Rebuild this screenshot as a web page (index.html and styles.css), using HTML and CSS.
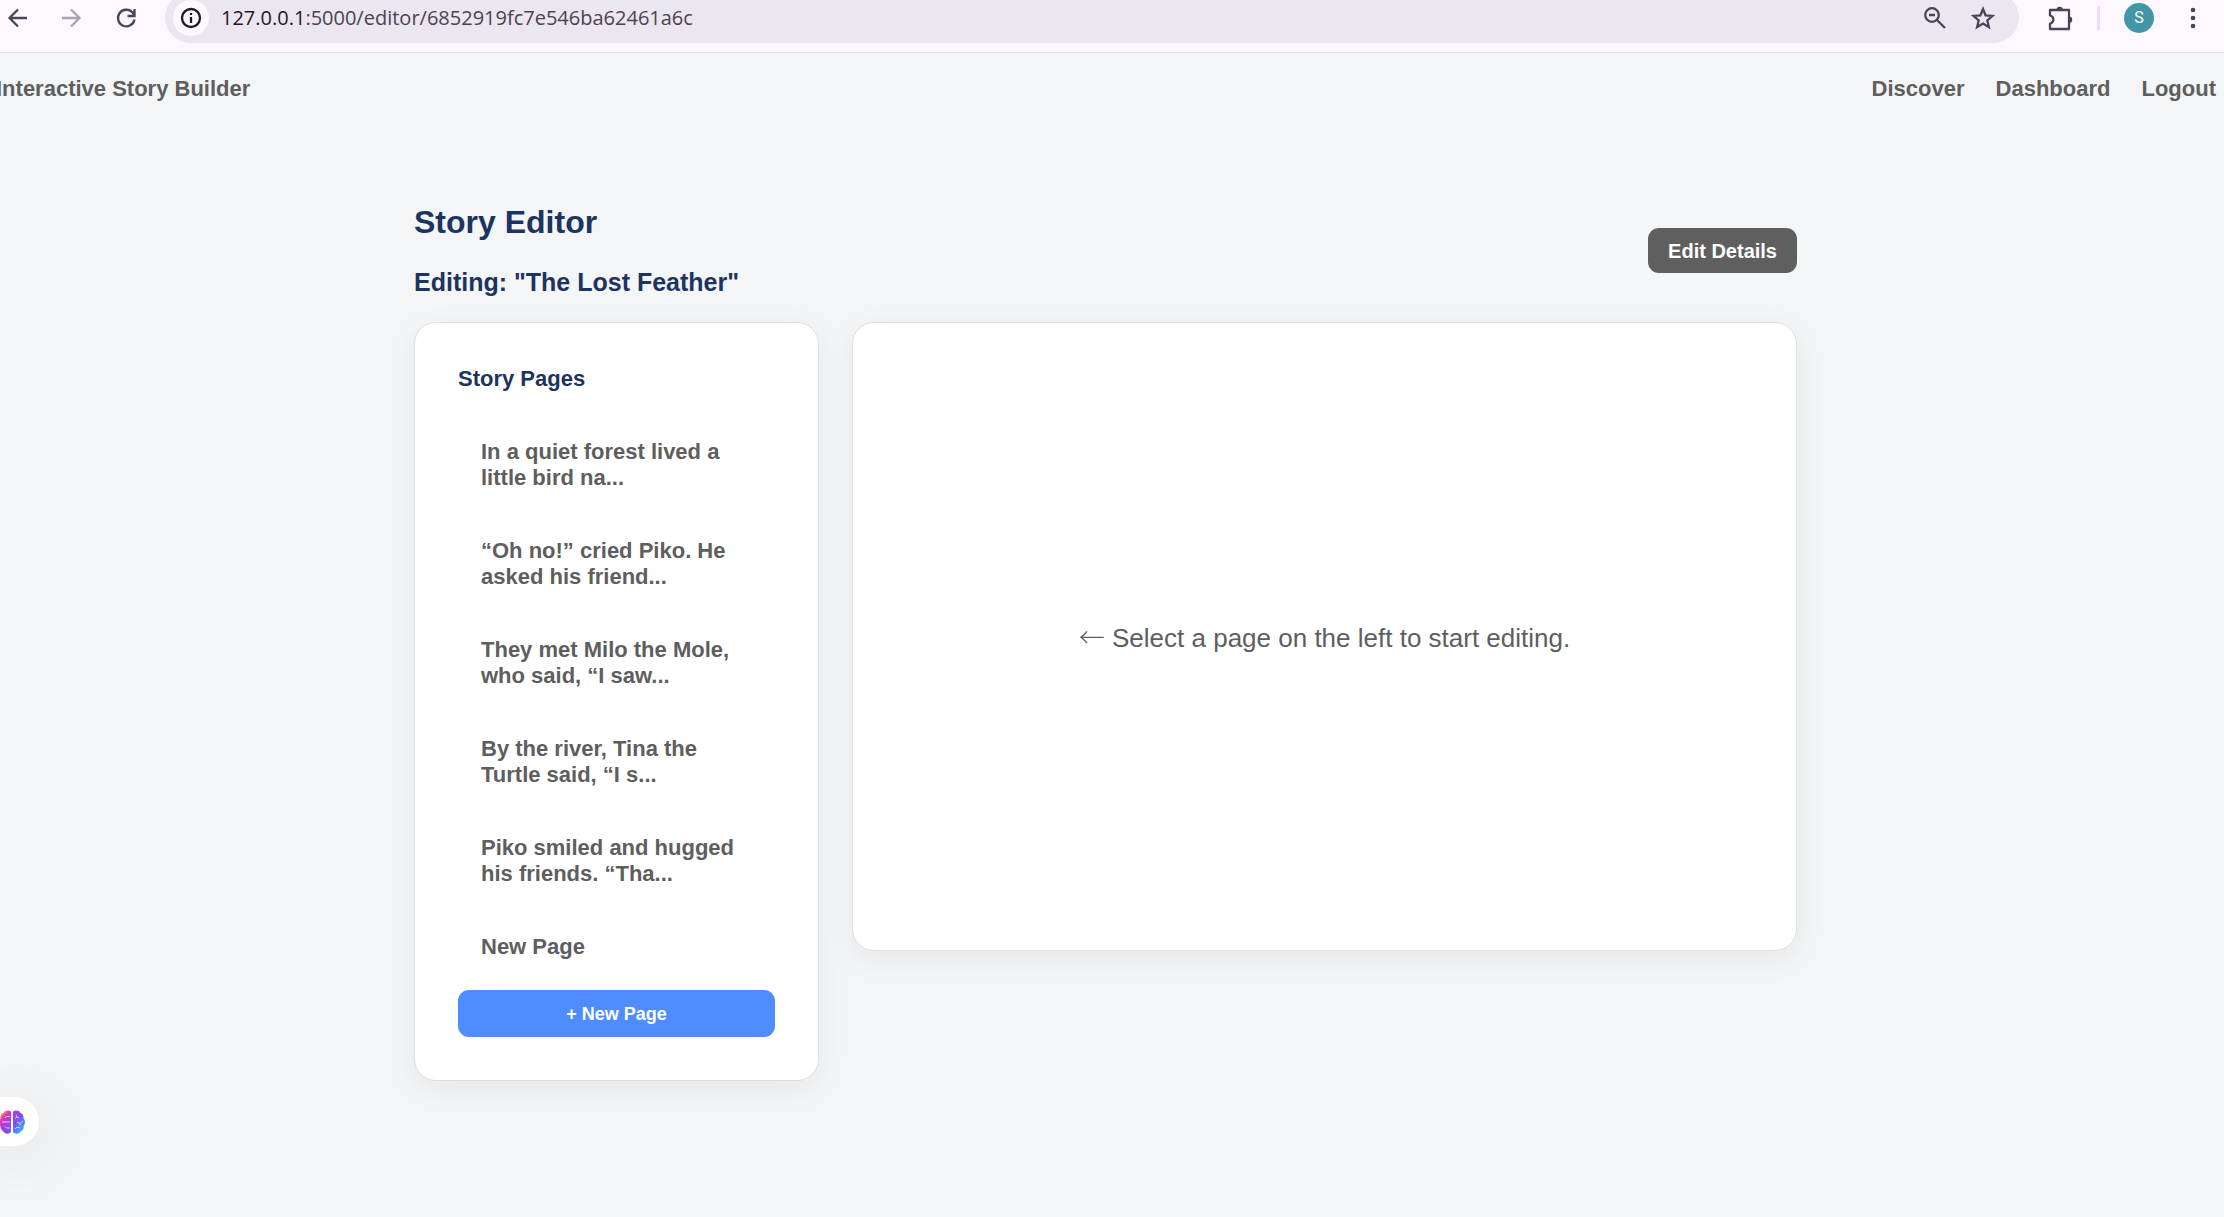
FILE: index.html
```html
<!DOCTYPE html>
<html lang="en">
<head>
<meta charset="utf-8">
<title>Story Editor</title>
<link rel="stylesheet" href="styles.css">
</head>
<body>
<div class="toolbar">
  <button class="tool" aria-label="Back"><svg width="24" height="24" viewBox="0 0 24 24"><path d="M21 12H4M12 3.500L3.500 12l8.500 8.500"/></svg></button>
  <button class="tool tool-off" aria-label="Forward" disabled><svg width="24" height="24" viewBox="0 0 24 24"><path d="M3 12h17M12 3.500l8.500 8.500-8.500 8.500"/></svg></button>
  <button class="tool" aria-label="Reload"><svg width="24" height="24" viewBox="0 0 24 24"><path d="M20.500 13.500A8.300 8.300 0 1 1 18.500 6.500L20 9M20.500 3v7h-7"/></svg></button>
  <div class="address">
    <button class="site-info" aria-label="Site information"><svg width="24" height="24" viewBox="0 0 24 24"><circle cx="12" cy="12" r="9"/><path d="M12 11v6M12 7v2"/></svg></button>
    <div class="url"><span class="host">127.0.0.1</span>:5000/editor/6852919fc7e546ba62461a6c</div>
    <button class="tool" aria-label="Zoom"><svg width="24" height="24" viewBox="0 0 24 24"><circle cx="9" cy="9" r="6.800"/><path d="M6 9h6M14 14l8 8"/></svg></button>
    <button class="tool" aria-label="Bookmark"><svg width="24" height="24" viewBox="0 0 24 24"><path d="M12 3l2.600 6.300 6.900.6-5.200 4.500 1.600 6.700-5.900-3.600-5.900 3.600 1.600-6.700-5.200-4.500 6.900-.6z"/></svg></button>
  </div>
  <div class="actions">
    <button class="tool" aria-label="Extensions"><svg width="28" height="28" viewBox="0 0 28 28"><path d="M4 6h19v19H4v-5.500c4.500-1 4.500-7 0-8z" stroke-linejoin="round"/><path class="solid" d="M10.500 6a3.200 3.200 0 0 1 6.400 0zM23 12.500a3.200 3.200 0 0 1 0 6.400z"/></svg></button>
    <span class="divider"></span>
    <button class="avatar">S</button>
    <button class="tool" aria-label="Menu"><svg width="24" height="24" viewBox="0 0 24 24"><g class="solid"><circle cx="12" cy="4" r="2.300"/><circle cx="12" cy="12" r="2.300"/><circle cx="12" cy="20" r="2.300"/></g></svg></button>
  </div>
</div>

<header class="nav">
  <a class="brand" href="#">Interactive Story Builder</a>
  <nav class="links">
    <a href="#">Discover</a>
    <a href="#">Dashboard</a>
    <a href="#">Logout</a>
  </nav>
</header>

<main class="page">
  <div class="content">
    <div class="heading">
      <div class="titles">
        <h1>Story Editor</h1>
        <h2>Editing: "The Lost Feather"</h2>
      </div>
      <button class="details">Edit Details</button>
    </div>
    <div class="editor">
      <aside class="card sidebar">
        <h3>Story Pages</h3>
        <ul class="pages">
          <li><a href="#">In a quiet forest lived a little bird na...</a></li>
          <li><a href="#">“Oh no!” cried Piko. He asked his friend...</a></li>
          <li><a href="#">They met Milo the Mole, who said, “I saw...</a></li>
          <li><a href="#">By the river, Tina the Turtle said, “I s...</a></li>
          <li><a href="#">Piko smiled and hugged his friends. “Tha...</a></li>
          <li><a href="#">New Page</a></li>
        </ul>
        <button class="add">+ New Page</button>
      </aside>
      <section class="card canvas">
        <p><span class="arrow">←</span> Select a page on the left to start editing.</p>
      </section>
    </div>
  </div>
</main>

<button class="assistant" aria-label="Assistant">
  <svg width="28" height="26" viewBox="0 0 28 26">
    <defs><linearGradient id="brain" gradientUnits="userSpaceOnUse" x1="3" y1="3" x2="25" y2="23"><stop offset="0" stop-color="#ffb020"/><stop offset=".25" stop-color="#d633c8"/><stop offset=".6" stop-color="#7a4df5"/><stop offset="1" stop-color="#2fb4ff"/></linearGradient></defs>
    <path fill="url(#brain)" stroke="none" d="M14 3v20c-2 2.500-6.500 2.500-8-1C4 21 3 18.500 3.500 17 1 15 1 11.500 3.500 9.500 3 7 4.500 4.500 6.500 4c1.500-3 6-3 7.500-1zM16 3c1.500-2 6-2 7.500 1 2 .5 3.500 3 3 5.500 2 2 2 5.500 0 7.500.5 1.500 0 4-2.500 5-1.500 3.500-6 3.500-8 1z"/>
    <path fill="none" stroke="#e9c4fb" stroke-width="1" d="M13 7.500H9.500L8 9M13 13H5M13 19H9.500L8 17.500M18 9.500l2-1.500M19 6l1 2 2 1M20 13l3 1.500 3-2.500M23 14.500v2M18 20l2-2M20 18l3 1"/>
  </svg>
</button>
</body>
</html>
```

FILE: styles.css
```css
* { box-sizing: border-box; }

body {
  margin: 0;
  min-height: 100vh;
  overflow-x: hidden;
  background: #f3f5f7;
  color: #5e5e5e;
  font-family: "Liberation Sans", Arial, sans-serif;
  font-size: 22px;
  line-height: 26px;
}

a { color: inherit; text-decoration: none; }
button { border: 0; padding: 0; font: inherit; color: inherit; background: none; }
svg { display: block; fill: none; stroke: currentColor; stroke-width: 2; }
.solid { fill: currentColor; stroke: none; }

/* Browser toolbar */
.toolbar {
  display: flex;
  align-items: flex-start;
  height: 53px;
  padding-left: 6px;
  overflow: hidden;
  background: #fdf7ff;
  border-bottom: 1px solid #e6dcea;
  color: #4a4458;
}
.toolbar svg { stroke-width: 2.3; }
.toolbar > .tool { margin: 6px 29px 0 0; }
.toolbar > .tool:nth-child(2) { margin-right: 31px; }
.toolbar > .tool:nth-child(3) { margin-right: 27px; }
.toolbar > .tool-off { color: #a9a3ae; }
.address {
  flex: 1;
  display: flex;
  align-items: center;
  gap: 24px;
  height: 51px;
  margin-top: -8px;
  padding: 0 24px 0 8px;
  border-radius: 26px;
  background: #ece6f0;
}
.site-info {
  display: grid;
  place-items: center;
  width: 36px;
  height: 36px;
  margin-right: -12px;
  border-radius: 50%;
  background: #fdf7ff;
  color: #1d1b20;
}
.url {
  flex: 1;
  font-family: "Open Sans", "Noto Sans", sans-serif;
  font-size: 20px;
  color: #49454f;
}
.host { color: #1d1b20; }
.actions {
  display: flex;
  align-items: center;
  height: 36px;
  padding: 0 19px 0 27px;
}
.divider { width: 3px; height: 24px; margin: 0 24px 0 23px; background: #eaddff; }
.avatar {
  width: 30px;
  height: 30px;
  margin-right: 27px;
  border-radius: 50%;
  background: #4196a8;
  color: #fff;
  font-family: Roboto, sans-serif;
  font-size: 16px;
}

/* Site navigation */
.nav {
  display: flex;
  justify-content: space-between;
  margin-left: -4px;
  padding: 23px 8px 22px 0;
  font-weight: 700;
}
.links { display: flex; gap: 31px; }

/* Editor page */
.page { padding: 80px 13px 80px 0; }
.content { max-width: 1383px; margin: 0 auto; }
.heading {
  display: flex;
  justify-content: space-between;
  align-items: center;
  margin-bottom: 25px;
  color: #1d3461;
}
.titles { display: grid; gap: 27px; }
h1, h2, h3, p { margin: 0; }
h1 { font-size: 32px; line-height: 37px; }
h2 { font-size: 25px; line-height: 29px; }
h3 { margin-bottom: 31px; font-size: 22px; line-height: 26px; color: #1d3461; }
.details {
  height: 45px;
  padding: 0 20px;
  border-radius: 11px;
  background: #5f5f5f;
  color: #fff;
  font-size: 20px;
  font-weight: 700;
}
.editor {
  display: grid;
  grid-template-columns: 3fr 7fr;
  gap: 33px;
  align-items: start;
}
.card {
  border: 1px solid #e0e0e0;
  border-radius: 22px;
  background: #fff;
  box-shadow: 0 8px 32px rgba(0, 0, 0, 0.06);
}
.sidebar { padding: 43px; }
.pages {
  display: grid;
  gap: 15px;
  margin: 0 0 14px;
  padding: 0;
  list-style: none;
  font-weight: 700;
}
.pages a { display: block; padding: 16px 23px; }
.add {
  display: block;
  width: 100%;
  height: 47px;
  border-radius: 11px;
  background: #4f8cff;
  color: #fff;
  font-size: 18px;
  font-weight: 700;
}
.canvas {
  display: grid;
  place-items: center;
  min-height: 629px;
  font-size: 26px;
}
.arrow { font-family: "Noto Sans CJK JP", sans-serif; font-weight: 300; }

/* Floating assistant tab */
.assistant {
  position: fixed;
  left: 0;
  bottom: 71px;
  width: 39px;
  height: 49px;
  border-radius: 0 25px 25px 0;
  background: #fff;
  box-shadow: 0 12px 60px rgba(0, 0, 0, 0.12);
}
.assistant svg { margin-left: -3px; }
```
